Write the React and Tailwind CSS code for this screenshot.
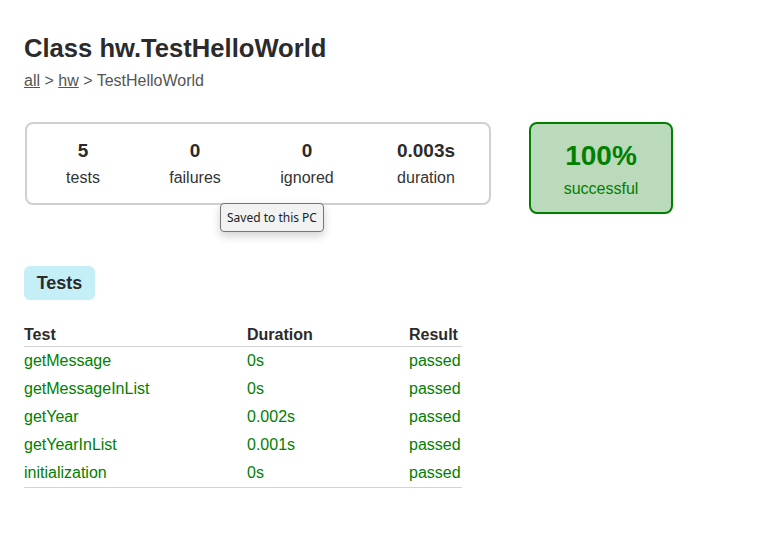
import React from 'react';

const stats = [
  { value: '5', label: 'tests', w: 'w-[112px]' },
  { value: '0', label: 'failures', w: 'w-[112px]' },
  { value: '0', label: 'ignored', w: 'w-[112px]' },
  { value: '0.003s', label: 'duration', w: 'w-[126px]' },
];

const rows = [
  { name: 'getMessage', duration: '0s' },
  { name: 'getMessageInList', duration: '0s' },
  { name: 'getYear', duration: '0.002s' },
  { name: 'getYearInList', duration: '0.001s' },
  { name: 'initialization', duration: '0s' },
];

const App = () => {
  return (
    <div
      className="min-h-screen bg-white px-[24px] pt-[33px] text-[#333]"
      style={{ fontFamily: '"Liberation Sans", Arial, sans-serif' }}
    >
      <h1 className="text-[25.6px] leading-[30px] font-bold text-[#2b2b2b]">Class hw.TestHelloWorld</h1>
      <div className="mt-[9px] text-[16px] leading-[18px] text-[#555]">
        <span className="underline">all</span> &gt; <span className="underline">hw</span> &gt; TestHelloWorld
      </div>

      {/* Summary */}
      <div className="mt-[32px] flex items-start gap-[38px]">
        <div className="relative ml-px flex w-[466px] rounded-[8px] border-2 border-[#d0d0d0] pt-[16px] pb-[16px]">
          {stats.map((s) => (
            <div key={s.label} className={`${s.w} flex flex-col items-center`}>
              <div className="text-[19px] leading-[22px] font-bold text-[#2b2b2b]">{s.value}</div>
              <div className="mt-[7px] text-[16px] leading-[18px] text-[#333]">{s.label}</div>
            </div>
          ))}

          {/* tooltip */}
          <div
            className="absolute left-[193px] top-[79px] rounded-[4px] border border-[#767676] bg-[#f2f2f2] px-[6px] py-[5px] text-[12px] leading-[17px] text-[#222] shadow-[0_4px_10px_rgba(0,0,0,0.18)]"
            style={{ fontFamily: '"Noto Sans", "Open Sans", sans-serif' }}
          >
            Saved to this PC
          </div>
        </div>

        <div className="flex h-[92px] w-[144px] flex-col items-center rounded-[8px] border-2 border-[#008000] bg-[#bbd9bb] pt-[16px] text-[#008000]">
          <div className="text-[28px] leading-[32px] font-bold">100%</div>
          <div className="mt-[8px] text-[16px] leading-[18px]">successful</div>
        </div>
      </div>

      {/* Tab */}
      <div className="mt-[52px] inline-flex h-[34px] w-[71px] items-center justify-center rounded-[6px] bg-[#c5eff7] text-[18px] font-bold text-[#2b2b2b]">
        Tests
      </div>

      {/* Table */}
      <div className="mt-[24px] w-[438px]">
        <div className="flex border-b border-[#d4d4d4] text-[16px] leading-[22px] font-bold text-[#2b2b2b]">
          <div className="w-[223px]">Test</div>
          <div className="w-[162px]">Duration</div>
          <div>Result</div>
        </div>
        <div className="border-b border-[#d4d4d4]">
          {rows.map((r) => (
            <div key={r.name} className="flex h-[28px] items-center text-[16px] text-[#008000]">
              <div className="w-[223px]">{r.name}</div>
              <div className="w-[162px]">{r.duration}</div>
              <div>passed</div>
            </div>
          ))}
        </div>
      </div>
    </div>
  );
};

export default App;
